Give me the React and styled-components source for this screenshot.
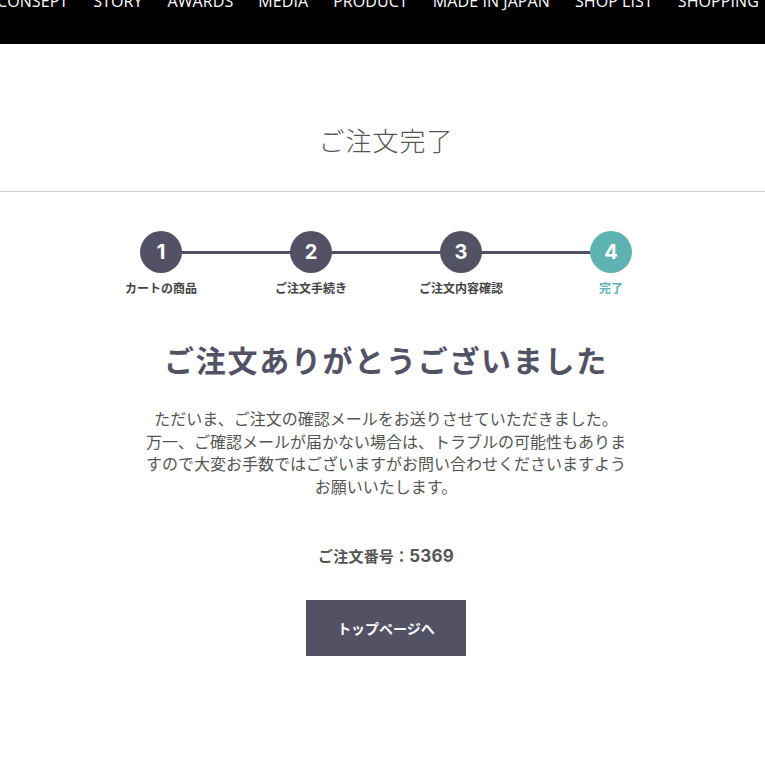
import React from "react";
import styled, { createGlobalStyle } from "styled-components";

const GlobalStyle = createGlobalStyle`
  html, body {
    margin: 0;
    padding: 0;
    background: #ffffff;
  }
  body {
    font-family: "Noto Sans CJK JP", "Noto Sans", sans-serif;
    color: #555555;
  }
`;

const navItems = [
  "CONSEPT",
  "STORY",
  "AWARDS",
  "MEDIA",
  "PRODUCT",
  "MADE IN JAPAN",
  "SHOP LIST",
  "SHOPPING",
];

const steps = [
  { num: 1, label: "カートの商品" },
  { num: 2, label: "ご注文手続き" },
  { num: 3, label: "ご注文内容確認" },
  { num: 4, label: "完了", active: true },
];

export default function App() {
  return (
    <>
      <GlobalStyle />
      <Header>
        <Nav>
          {navItems.map((item) => (
            <NavItem key={item}>{item}</NavItem>
          ))}
        </Nav>
      </Header>

      <PageTitle>ご注文完了</PageTitle>

      <Main>
        <Steps>
          {steps.map((s) => (
            <Step key={s.num}>
              <Circle $active={s.active}>{s.num}</Circle>
              <StepLabel $active={s.active}>{s.label}</StepLabel>
            </Step>
          ))}
        </Steps>

        <Heading>ご注文ありがとうございました</Heading>
        <Message>
          ただいま、ご注文の確認メールをお送りさせていただきました。
          万一、ご確認メールが届かない場合は、トラブルの可能性もありますので大変お手数ではございますがお問い合わせくださいますようお願いいたします。
        </Message>

        <OrderNo>
          ご注文番号：<Num>5369</Num>
        </OrderNo>

        <TopButton>トップページへ</TopButton>
      </Main>
    </>
  );
}

const Header = styled.header`
  height: 44px;
  background: #000000;
  overflow: hidden;
`;

const Nav = styled.ul`
  display: flex;
  gap: 25px;
  margin: -9px 0 0 -3px;
  padding: 0;
  list-style: none;
  white-space: nowrap;
`;

const NavItem = styled.li`
  font-family: "Open Sans", "Noto Sans", sans-serif;
  font-size: 16px;
  line-height: 20px;
  letter-spacing: 0.08px;
  color: #ffffff;
`;

const PageTitle = styled.h1`
  margin: 0;
  padding: 78px 0 0 7px;
  height: 148px;
  box-sizing: border-box;
  border-bottom: 1px solid #cccccc;
  text-align: center;
  font-size: 26px;
  font-weight: 300;
  line-height: 36px;
  color: #555555;
  letter-spacing: 1px;
`;

const Main = styled.main`
  display: flex;
  flex-direction: column;
  align-items: center;
  padding: 39px 0 60px 7px;
`;

const Steps = styled.ol`
  display: flex;
  margin: 0;
  padding: 0;
  list-style: none;
`;

const Step = styled.li`
  position: relative;
  width: 150px;
  display: flex;
  flex-direction: column;
  align-items: center;

  & + &::before {
    content: "";
    position: absolute;
    top: 20px;
    right: 50%;
    width: 150px;
    height: 3px;
    background: #525063;
    z-index: 0;
  }
`;

const Circle = styled.div`
  position: relative;
  z-index: 1;
  width: 42px;
  height: 42px;
  border-radius: 50%;
  background: ${(p) => (p.$active ? "#5fb2b2" : "#535265")};
  color: #ffffff;
  display: flex;
  align-items: center;
  justify-content: center;
  font-family: "Inter", "Lato", sans-serif;
  font-weight: 700;
  font-size: 20px;
`;

const StepLabel = styled.div`
  margin-top: 6px;
  font-size: 12px;
  font-weight: 700;
  line-height: 17px;
  color: ${(p) => (p.$active ? "#5fb2b2" : "#444444")};
`;

const Heading = styled.h2`
  margin: 41px 0 0;
  font-size: 30px;
  font-weight: 700;
  line-height: 44px;
  letter-spacing: 1.7px;
  color: #535265;
`;

const Message = styled.p`
  margin: 26px 0 0;
  width: 482px;
  text-align: center;
  font-size: 16px;
  line-height: 22.5px;
  color: #555555;
`;

const OrderNo = styled.p`
  margin: 48px 0 0;
  font-size: 15px;
  font-weight: 700;
  line-height: 22px;
  letter-spacing: 0.2px;
  color: #555555;
`;

const Num = styled.span`
  font-family: "Inter", "Lato", sans-serif;
  font-size: 17px;
`;

const TopButton = styled.button`
  margin-top: 33px;
  width: 160px;
  height: 56px;
  border: none;
  background: #535265;
  color: #ffffff;
  font-family: "Noto Sans CJK JP", sans-serif;
  font-size: 14px;
  font-weight: 700;
  cursor: pointer;
`;
